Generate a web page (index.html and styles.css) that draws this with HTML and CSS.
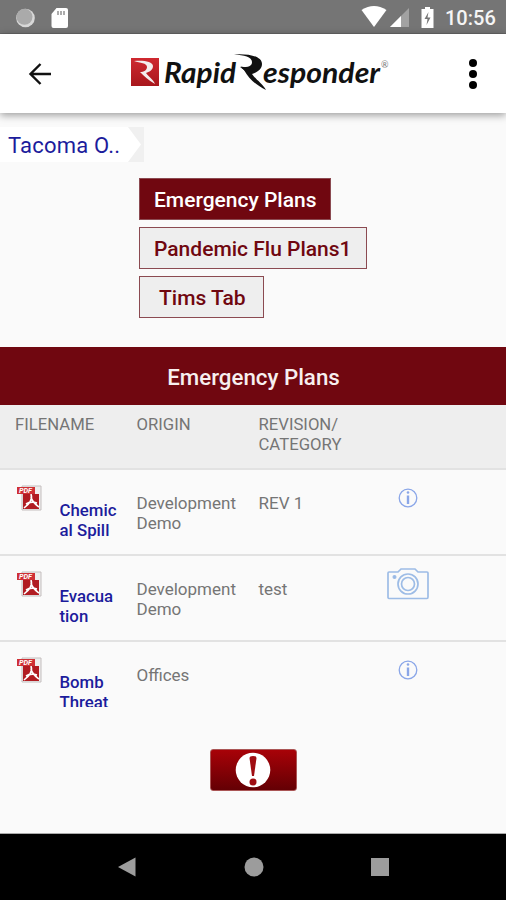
FILE: index.html
```
<!DOCTYPE html>
<html lang="en">

<head>
    <meta charset="UTF-8">
    <meta name="viewport" content="width=device-width, initial-scale=1.0">
    <title>Rapid Responder</title>
    <link rel="stylesheet" href="styles.css">
</head>

<body>
    <!-- shared icons -->
    <svg class="defs" width="0" height="0">
        <defs>
            <linearGradient id="red" x1="0" y1="0" x2="0" y2="1">
                <stop offset="0" stop-color="#cf2930" />
                <stop offset="1" stop-color="#a8171c" />
            </linearGradient>
            <symbol id="pdf" viewBox="0 0 25 26">
                <path d="M5 1h19v24H5z" fill="#eee" stroke="#c4bebe" />
                <path d="M6 9h16v15H6z" fill="#b11c22" />
                <path d="M14 9c2 6-2 10-7 14M14 12c1 5 4 7 8 10M9 19c3-2 8-2 11-1" fill="none" stroke="#fff" stroke-width="1.6" />
                <path d="M0 2h18v7H0z" fill="#cf3035" />
                <text x="2" y="8" textLength="13" lengthAdjust="spacingAndGlyphs" class="pdf-label">PDF</text>
            </symbol>
            <symbol id="info" viewBox="0 0 20 20">
                <circle cx="10" cy="10" r="8.8" fill="none" stroke="#8aa6e8" stroke-width="1.3" />
                <path d="M10 7.5v8.5" stroke="#8aa6e8" stroke-width="2.4" />
                <circle cx="10" cy="4.5" r="1.3" fill="#8aa6e8" />
            </symbol>
        </defs>
    </svg>

    <div class="status">
        <svg width="60" height="24" viewBox="0 0 60 24">
            <circle cx="17.5" cy="12" r="9.3" fill="#d8d8d8" />
            <circle cx="16.5" cy="10.8" r="8" fill="#aaa" />
            <path d="M48.5 2H58q2 0 2 2v16q0 2-2 2H45.500q-2 0-2-2V8z" fill="#fff" />
            <path d="M50 5v4M53 5v4M56 5v4" stroke="#999" stroke-width="1.6" />
        </svg>
        <svg class="status-right" width="76" height="24" viewBox="0 0 76 24">
            <path d="M.5 4Q13-4 25.500 4L13 21z" fill="#fff" />
            <path d="M48 2v19H29z" fill="#a2a2a2" />
            <path d="M40 10v11H29z" fill="#fff" />
            <path d="M64 1h5v2h3.500v19h-12V3H64z" fill="#fff" />
            <path d="M67.500 6l-4 7h3l-1 6 4-7.500h-3z" fill="#777" />
        </svg>
        <span class="time">10:56</span>
    </div>

    <header>
        <svg width="24" height="24" viewBox="0 0 24 24">
            <path d="M23 12H3M12.500 2L2.500 12l10 10" fill="none" stroke="#111" stroke-width="2.4" />
        </svg>
        <svg class="logo" width="260" height="44" viewBox="0 0 260 44">
            <rect x="1" y="7" width="28" height="28" fill="url(#red)" />
            <path d="M4 10c8-1 19 0 19 5 0 4-4 6-7 7 3 4 7 6 9 11-7-4-11-8-15-12 4 0 7-2 7-5 0-4-7-4-13-6z" fill="#f4eded" />
            <text x="34" y="32" textLength="72" lengthAdjust="spacingAndGlyphs">Rapid</text>
            <path d="M104 3.500c12-1 28 1 28 9.500 0 5-4 8-10 10 4 6 10 9 14 16-10-5-17-11-22-20l-4-3c10 1 12-2 12-5 0-5-8-7-18-7.500z" fill="#111" />
            <path d="M110.500 15.500l13 2-3 8z" fill="#111" />
            <text x="133" y="32" textLength="117" lengthAdjust="spacingAndGlyphs">esponder</text>
            <text x="251" y="17" class="reg">®</text>
        </svg>
        <svg width="10" height="32" viewBox="0 0 10 32">
            <circle cx="5" cy="5" r="4" />
            <circle cx="5" cy="16" r="4" />
            <circle cx="5" cy="27" r="4" />
        </svg>
    </header>

    <main>
        <div class="crumb">
            <span>Tacoma O..</span>
            <svg width="16" height="35" viewBox="0 0 16 35">
                <path d="M0 0h16v35H0l13-17.500z" fill="#f0f0f0" />
            </svg>
        </div>

        <div class="tabs">
            <button class="active">Emergency Plans</button>
            <button>Pandemic Flu Plans1</button>
            <button class="tims">Tims Tab</button>
        </div>

        <h1>Emergency Plans</h1>
        <div class="row head">
            <div>FILENAME</div>
            <div>ORIGIN</div>
            <div>REVISION/<br>CATEGORY</div>
        </div>
        <div class="list">
            <div class="row">
                <div class="file">
                    <svg width="25" height="26"><use href="#pdf" /></svg>
                    <a href="#">Chemic<br>al Spill</a>
                </div>
                <div>Development<br>Demo</div>
                <div>REV 1</div>
                <div class="action"><svg width="20" height="20"><use href="#info" /></svg></div>
            </div>
            <div class="row">
                <div class="file">
                    <svg width="25" height="26"><use href="#pdf" /></svg>
                    <a href="#">Evacua<br>tion</a>
                </div>
                <div>Development<br>Demo</div>
                <div>test</div>
                <div class="action">
                    <svg width="42" height="32" viewBox="0 0 42 32" fill="none" stroke="#9dbce6" stroke-width="1.7">
                        <path d="M2 4h9l3-3h14l3 3h9q1 0 1 1v24q0 1.500-1 1.500H2q-1 0-1-1.500V5q0-1 1-1z" />
                        <circle cx="21" cy="16" r="10" />
                        <circle cx="21" cy="16" r="6.5" />
                        <circle cx="7.5" cy="9" r="1.2" fill="#7ba2dc" />
                    </svg>
                </div>
            </div>
            <div class="row">
                <div class="file">
                    <svg width="25" height="26"><use href="#pdf" /></svg>
                    <a href="#">Bomb<br>Threat</a>
                </div>
                <div>Offices</div>
                <div></div>
                <div class="action"><svg width="20" height="20"><use href="#info" /></svg></div>
            </div>
        </div>

        <button class="alert">
            <svg width="36" height="36" viewBox="0 0 36 36">
                <circle cx="18" cy="18" r="17.3" fill="#fff" />
                <path d="M14.500 6q0-2 3.500-2t3.500 2L19 24h-2z" fill="#a00d12" />
                <circle cx="18" cy="30" r="3.5" fill="#a00d12" />
            </svg>
        </button>
    </main>

    <footer>
        <svg width="18" height="20" viewBox="0 0 18 20"><path d="M0 10L17.500.5v19z" /></svg>
        <svg width="20" height="20" viewBox="0 0 20 20"><circle cx="10" cy="10" r="9.5" /></svg>
        <svg width="18" height="18" viewBox="0 0 18 18"><rect width="18" height="18" /></svg>
    </footer>
</body>

</html>
```
FILE: styles.css
```
* {
    box-sizing: border-box;
}

body {
    margin: 0;
    height: 900px;
    display: flex;
    flex-direction: column;
    overflow: hidden;
    background-color: #fafafa;
    font-family: Roboto, sans-serif;
    color: #757575;
}

svg {
    display: block;
    flex-shrink: 0;
}

.defs {
    visibility: hidden;
}

.status {
    height: 34px;
    display: flex;
    align-items: center;
    padding: 2px 11px 0 8px;
    background-color: #757575;
    border-bottom: 1px solid #666;
}

.status-right {
    margin-left: auto;
}

.time {
    margin-left: 8px;
    width: 50px;
    font-size: 20px;
    font-weight: 500;
    color: #f5f5f5;
}

header {
    height: 79px;
    display: flex;
    align-items: center;
    justify-content: space-between;
    padding: 0 28px;
    background-color: #fff;
    box-shadow: 0 2px 8px rgba(0, 0, 0, 0.4);
    z-index: 1;
}

.logo {
    margin: -2px 0 0 -1px;
}

.logo text {
    font: italic bold 28px Lato, sans-serif;
    fill: #111;
}

.logo .reg {
    font: 9px Lato, sans-serif;
    fill: #777;
}

.pdf-label {
    font: italic bold 7px Roboto, sans-serif;
    fill: #fff;
}

main {
    height: 721px;
    padding-top: 14px;
    border-bottom: 1px solid #aaa;
}

.crumb {
    width: 144px;
    height: 35px;
    display: flex;
    justify-content: space-between;
    align-items: center;
    padding-left: 8px;
    background-color: #fff;
    font-size: 22px;
    letter-spacing: 0.2px;
    color: #1c1c9c;
}

.crumb span {
    padding-top: 2px;
}

.tabs {
    display: flex;
    flex-direction: column;
    align-items: flex-start;
    gap: 7px;
    margin: 16px 0 29px 139px;
}

.tabs button {
    height: 42px;
    width: 228px;
    padding: 2px 0 0 14px;
    border: 1px solid #8b4a51;
    background-color: #eee;
    font: 500 21px Roboto, sans-serif;
    text-align: left;
    color: #700710;
}

.tabs .active {
    width: 192px;
    background-color: #700710;
    color: #fff;
}

.tabs .tims {
    width: 125px;
    padding-left: 19px;
}

h1 {
    height: 58px;
    margin: 0;
    padding-left: 1px;
    background-color: #700710;
    font-size: 22.3px;
    font-weight: 500;
    line-height: 60px;
    text-align: center;
    color: #f7efef;
}

.row {
    height: 86px;
    display: grid;
    grid-template-columns: 121.5px 122px 122px 55px;
    padding: 23px 0 0 15px;
    border-bottom: 2px solid #e2e2e2;
    font-size: 17px;
    line-height: 20px;
}

.head {
    height: 65px;
    padding-top: 10px;
    background-color: #eee;
    font-size: 16.7px;
}

.list {
    height: 237px;
    overflow: hidden;
}

.file {
    display: flex;
    gap: 17.5px;
    padding-left: 2px;
    margin-top: -8px;
}

.file a {
    margin-top: 15px;
    font-weight: 500;
    font-size: 16.8px;
    text-decoration: none;
    color: #1c1c9c;
}

.action {
    height: 40px;
    display: flex;
    align-items: center;
    justify-content: center;
    margin-top: -15px;
}

.alert {
    width: 87px;
    height: 42px;
    display: flex;
    align-items: center;
    justify-content: center;
    margin: 42px auto 0;
    padding: 0;
    border: 1px solid #a55;
    border-radius: 3px;
    background: linear-gradient(#a80208, #640004);
}

footer {
    flex: 1;
    display: flex;
    align-items: center;
    justify-content: space-between;
    padding: 0 117px 0 118px;
    background-color: #000;
    fill: #9c9c9c;
}
```
